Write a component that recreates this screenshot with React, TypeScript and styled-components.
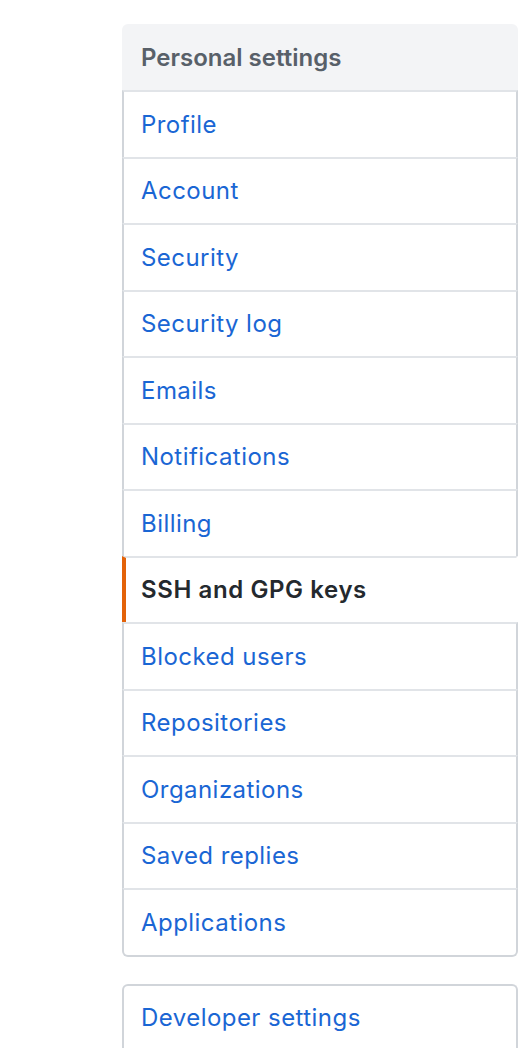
import React from "react";
import styled, { createGlobalStyle, css } from "styled-components";

const GlobalStyle = createGlobalStyle`
  html, body {
    margin: 0;
    padding: 0;
    background: #ffffff;
  }
  body {
    font-family: "Inter", "Liberation Sans", sans-serif;
    -webkit-font-smoothing: antialiased;
  }
`;

const Page = styled.div`
  padding: 24px 0 0 122px;
`;

const Sidebar = styled.nav`
  width: 396px;
  display: flex;
  flex-direction: column;
  gap: 27px;
`;

const Menu = styled.div`
  display: flex;
  flex-direction: column;
  border-radius: 6px;
`;

const Heading = styled.div`
  height: 66px;
  display: flex;
  align-items: center;
  padding-left: 19px;
  background: #f3f4f6;
  border-radius: 6px 6px 0 0;
  color: #586069;
  font-size: 24px;
  font-weight: 600;
`;

const Item = styled.a<{ $selected?: boolean; $first?: boolean; $last?: boolean }>`
  display: flex;
  align-items: center;
  height: 64.5px;
  padding-left: 17px;
  border-top: 2px solid #e1e4e8;
  border-left: 2px solid #d1d5da;
  border-right: 2px solid #d1d5da;
  color: #1a66d4;
  font-size: 24px;
  letter-spacing: 0.45px;
  text-decoration: none;
  cursor: pointer;

  ${(p) =>
    p.$selected &&
    css`
      border-left: 4px solid #e36209;
      border-right-color: transparent;
      padding-left: 15px;
      color: #24292e;
      font-weight: 600;
      letter-spacing: 0.6px;
    `}

  ${(p) =>
    p.$first &&
    css`
      border-top-color: #d1d5da;
      border-radius: 6px 6px 0 0;
    `}

  ${(p) =>
    p.$last &&
    css`
      border-bottom: 2px solid #d1d5da;
      border-radius: 0 0 6px 6px;
    `}
`;

const personal = [
  "Profile",
  "Account",
  "Security",
  "Security log",
  "Emails",
  "Notifications",
  "Billing",
  "SSH and GPG keys",
  "Blocked users",
  "Repositories",
  "Organizations",
  "Saved replies",
  "Applications",
];

const selected = "SSH and GPG keys";

export default function App() {
  return (
    <Page>
      <GlobalStyle />
      <Sidebar>
        <Menu>
          <Heading>Personal settings</Heading>
          {personal.map((label, i) => (
            <Item
              key={label}
              $selected={label === selected}
              $last={i === personal.length - 1}
            >
              {label}
            </Item>
          ))}
        </Menu>
        <Menu>
          <Item $first>Developer settings</Item>
        </Menu>
      </Sidebar>
    </Page>
  );
}
